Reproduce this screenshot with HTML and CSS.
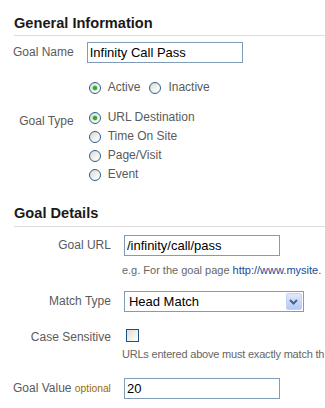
FILE: index.html
```html
<!DOCTYPE html>
<html>
<head>
<meta charset="utf-8">
<link rel="stylesheet" href="styles.css">
</head>
<body>
<div class="page">
  <h2 class="section-title first">General Information</h2>
  <div class="form">
    <div class="row row-name">
      <label class="lbl">Goal Name</label>
      <div class="field"><input class="text-input" type="text" value="Infinity Call Pass"></div>
    </div>
    <div class="row row-status">
      <span class="lbl"></span>
      <div class="field options-inline">
        <span class="option"><span class="radio checked"></span>Active</span>
        <span class="option"><span class="radio"></span>Inactive</span>
      </div>
    </div>
    <div class="row row-type">
      <span class="lbl lbl-type">Goal Type</span>
      <div class="field options-stack">
        <span class="option"><span class="radio checked"></span>URL Destination</span>
        <span class="option"><span class="radio"></span>Time On Site</span>
        <span class="option"><span class="radio"></span>Page/Visit</span>
        <span class="option"><span class="radio"></span>Event</span>
      </div>
    </div>
  </div>

  <h2 class="section-title second">Goal Details</h2>
  <div class="form">
    <div class="row row-url">
      <label class="lbl">Goal URL</label>
      <div class="field"><input class="text-input" type="text" value="/infinity/call/pass"></div>
    </div>
    <div class="row row-hint1">
      <span class="lbl"></span>
      <div class="field hint">e.g. For the goal page <a class="link" href="#">http://www.mysite.</a></div>
    </div>
    <div class="row row-match">
      <label class="lbl">Match Type</label>
      <div class="field">
        <div class="select">
          <span class="select-text">Head Match</span>
          <span class="select-btn">
            <svg width="9" height="6" viewBox="0 0 9 6"><path d="M1 1 L4.5 4.5 L8 1" fill="none" stroke="#4d6185" stroke-width="2"/></svg>
          </span>
        </div>
      </div>
    </div>
    <div class="row row-case">
      <label class="lbl lbl-case">Case Sensitive</label>
      <div class="field"><span class="checkbox"></span></div>
    </div>
    <div class="row row-hint2">
      <span class="lbl"></span>
      <div class="field hint hint-tight">URLs entered above must exactly match th</div>
    </div>
    <div class="row row-value">
      <label class="lbl">Goal Value <span class="optional">optional</span></label>
      <div class="field"><input class="text-input" type="text" value="20"></div>
    </div>
  </div>
</div>
</body>
</html>
```

FILE: styles.css
```css
html, body {
  margin: 0;
  padding: 0;
  background: #fff;
}
body {
  width: 325px;
  height: 408px;
  overflow: hidden;
  font-family: "Liberation Sans", Arial, sans-serif;
  font-size: 12px;
  color: #5a5a5a;
}
.page {
  padding-left: 13px;
}
.section-title {
  margin: 0 0 0 1px;
  font-size: 14.6px;
  font-weight: bold;
  line-height: 18px;
  color: #1a1a1a;
  padding-bottom: 3px;
  border-bottom: 1px solid #dcdcdc;
}
.section-title.first {
  margin-top: 14px;
}
.section-title.second {
  margin-top: 20px;
  padding-bottom: 4px;
}
.form {
  display: grid;
  grid-template-columns: auto 1fr;
  column-gap: 11px;
}
.row {
  display: contents;
}
.lbl {
  text-align: right;
  white-space: nowrap;
  line-height: 21px;
  color: #5a5a5a;
}
.field {
  min-width: 0;
  white-space: nowrap;
}
.row-name > * { margin-top: 6px; }
.row-status > * { margin-top: 15px; }
.row-type > * { margin-top: 11px; }
.row-url > * { margin-top: 8px; }
.row-hint1 > * { margin-top: 7px; }
.row-match > * { margin-top: 14px; }
.row-case > * { margin-top: 17px; }
.row-hint2 > * { margin-top: 2px; }
.row-value > * { margin-top: 17px; }

.text-input {
  display: block;
  box-sizing: border-box;
  width: 156px;
  height: 21px;
  margin: 0 0 0 2px;
  padding: 0 2px;
  border: 1px solid #7f9db9;
  font-family: "Liberation Sans", Arial, sans-serif;
  font-size: 13px;
  color: #000;
  background: #fff;
  outline: none;
}
.options-inline {
  display: flex;
  align-items: center;
  gap: 5px;
  line-height: 19px;
}
.options-stack {
  display: flex;
  flex-direction: column;
  line-height: 19px;
}
.lbl-type {
  line-height: 19px;
  padding-top: 4px;
}
.option {
  display: flex;
  align-items: center;
  height: 19px;
  color: #5a5a5a;
}
.radio {
  position: relative;
  box-sizing: border-box;
  width: 12px;
  height: 12px;
  margin: 0 7px 0 4px;
  border: 1px solid #2f5d8c;
  border-radius: 50%;
  background: linear-gradient(135deg, #d9d9d2 0%, #f4f4f0 60%, #ffffff 100%);
  flex: none;
}
.radio.checked::after {
  content: "";
  position: absolute;
  left: 3px;
  top: 3px;
  width: 4px;
  height: 4px;
  border-radius: 50%;
  background: #2ea92e;
  box-shadow: 0 0 0 0.5px #7ccc7c;
}
.hint {
  font-size: 11px;
  line-height: 14px;
  color: #666;
}
.hint-tight {
  letter-spacing: -0.2px;
}
.link {
  color: #1b4a8e;
  text-decoration: none;
}
.select {
  box-sizing: border-box;
  width: 180px;
  height: 21px;
  margin-left: 2px;
  border: 1px solid #7f9db9;
  display: flex;
  align-items: center;
  justify-content: space-between;
  background: #fff;
}
.select-text {
  padding-left: 4px;
  font-size: 13px;
  color: #000;
}
.select-btn {
  box-sizing: border-box;
  width: 16px;
  height: 17px;
  margin-right: 1px;
  border: 1px solid #c3d3f5;
  border-radius: 2px;
  background: linear-gradient(180deg, #e1eafe 0%, #c6d6fb 55%, #b4c8f6 100%);
  display: flex;
  align-items: center;
  justify-content: center;
}
.select-btn svg {
  display: block;
}
.lbl-case {
  line-height: 16px;
}
.checkbox {
  display: block;
  box-sizing: border-box;
  width: 13px;
  height: 13px;
  margin-left: 4px;
  border: 1px solid #1c5180;
  background: linear-gradient(135deg, #dcdcd7 0%, #f2f2ef 60%, #ffffff 100%);
}
.optional {
  font-size: 10.3px;
  color: #9c6a00;
}
```
